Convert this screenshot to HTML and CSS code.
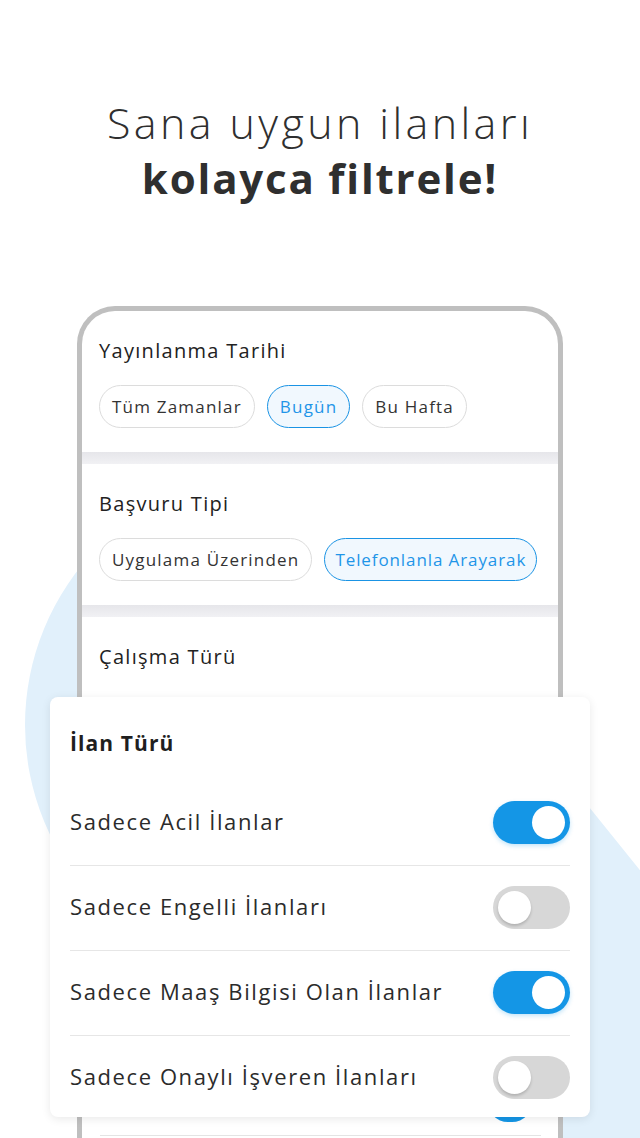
FILE: index.html
```html
<!DOCTYPE html>
<html lang="tr">
<head>
<meta charset="utf-8">
<title>Filtrele</title>
<link rel="stylesheet" href="styles.css">
</head>
<body>
<div class="page">
  <svg class="bg-shape" width="640" height="1138" viewBox="0 0 640 1138" aria-hidden="true">
    <path d="M278 978 A253 253 0 0 1 278 472 L340 498 L760 1019 L760 1200 L278 1200 Z" fill="#e1f0fb"/>
  </svg>

  <header class="hero">
    <h1 class="hero-title"><span class="light">Sana uygun ilanları</span><br><span class="bold">kolayca filtrele!</span></h1>
  </header>

  <div class="phone">
    <section class="f-section">
      <h2 class="f-title">Yayınlanma Tarihi</h2>
      <div class="chips">
        <span class="chip">Tüm Zamanlar</span>
        <span class="chip chip-on">Bugün</span>
        <span class="chip">Bu Hafta</span>
      </div>
    </section>
    <div class="sep"></div>
    <section class="f-section">
      <h2 class="f-title">Başvuru Tipi</h2>
      <div class="chips">
        <span class="chip">Uygulama Üzerinden</span>
        <span class="chip chip-on">Telefonlanla Arayarak</span>
      </div>
    </section>
    <div class="sep"></div>
    <section class="f-section f-last">
      <h2 class="f-title">Çalışma Türü</h2>
      <div class="under-row"><span class="under-toggle"></span></div>
    </section>
  </div>

  <div class="card">
    <h3 class="card-title">İlan Türü</h3>
    <div class="row"><span class="row-label">Sadece Acil İlanlar</span><span class="toggle on"><span class="knob"></span></span></div>
    <div class="row"><span class="row-label">Sadece Engelli İlanları</span><span class="toggle"><span class="knob"></span></span></div>
    <div class="row"><span class="row-label">Sadece Maaş Bilgisi Olan İlanlar</span><span class="toggle on"><span class="knob"></span></span></div>
    <div class="row"><span class="row-label">Sadece Onaylı İşveren İlanları</span><span class="toggle"><span class="knob"></span></span></div>
  </div>
</div>
</body>
</html>
```

FILE: styles.css
```css
* { box-sizing: border-box; }
html, body { margin: 0; padding: 0; background: #ffffff; }
body { font-family: "Open Sans", "Noto Sans", sans-serif; color: #2b2b2b; }

.page {
  position: relative;
  width: 640px;
  height: 1138px;
  overflow: hidden;
  background: #ffffff;
}

.bg-shape {
  position: absolute;
  left: 0;
  top: 0;
  z-index: 0;
}

.hero {
  position: relative;
  z-index: 1;
  padding-top: 95px;
  text-align: center;
}
.hero-title {
  margin: 0;
  font-size: 42px;
  line-height: 55px;
  color: #2f2f2f;
  font-weight: 400;
}
.hero-title .light { font-size: 43px; font-weight: 300; letter-spacing: 3.4px; }
.hero-title .bold { font-weight: 700; letter-spacing: 1.8px; }

.phone {
  position: relative;
  z-index: 1;
  margin: 101px 0 0 77px;
  width: 486px;
  height: 900px;
  border: 5px solid #bfbfbf;
  border-bottom: none;
  border-radius: 38px 38px 0 0;
  background: #ffffff;
}

.f-section {
  padding: 28px 18px 24px 17px;
}
.f-title {
  margin: 0;
  font-size: 20px;
  line-height: 24px;
  font-weight: 400;
  color: #222;
  letter-spacing: 1.3px;
}
.chips {
  display: flex;
  gap: 12px;
  margin-top: 22px;
}
.chip {
  display: inline-flex;
  align-items: center;
  height: 43px;
  padding: 0 12px;
  border: 1.5px solid #dcdcdc;
  border-radius: 22px;
  font-size: 17px;
  letter-spacing: 1.2px;
  color: #333;
  white-space: nowrap;
}
.chip-on {
  border-color: #1a93e4;
  background: #f1f8fe;
  color: #1f95e8;
}
.chip-on:last-child { padding: 0 10px; letter-spacing: 0.9px; }

.sep {
  height: 12px;
  background: linear-gradient(#e6e6ea, #f1f1f4);
}

.f-last { padding-bottom: 0; }
.under-row {
  display: flex;
  justify-content: flex-end;
  margin: 411px 0 0 1px;
  width: 441px;
  padding: 0 8px 13px 0;
  border-bottom: 1px solid #e4e4e4;
}
.under-toggle {
  width: 46px;
  height: 42px;
  border-radius: 21px;
  background: #1496e6;
}

.card {
  position: absolute;
  z-index: 2;
  left: 50px;
  top: 697px;
  width: 540px;
  height: 420px;
  padding: 34px 20px 0 20px;
  background: #ffffff;
  border-radius: 8px;
  box-shadow: 0 2px 10px rgba(0, 0, 0, 0.09);
}
.card-title {
  margin: 0 0 26px 0;
  font-size: 21px;
  line-height: 24px;
  font-weight: 700;
  color: #1f1f1f;
  letter-spacing: 1.1px;
}
.row {
  display: flex;
  align-items: center;
  justify-content: space-between;
  height: 85px;
  padding: 20px 0 21px 0;
  border-bottom: 1px solid #e6e6e6;
}
.row:last-child { border-bottom: none; height: 84px; }
.row-label {
  font-size: 22px;
  letter-spacing: 1.6px;
  color: #2b2b2b;
  margin-top: -3px;
}
.toggle {
  position: relative;
  display: flex;
  align-items: center;
  width: 77px;
  height: 43px;
  padding: 0 5px;
  border-radius: 22px;
  background: #d7d7d7;
  justify-content: flex-start;
}
.toggle.on {
  background: #1496e6;
  justify-content: flex-end;
  box-shadow: 0 2px 4px rgba(20, 150, 230, 0.25);
}
.knob {
  width: 33px;
  height: 33px;
  border-radius: 50%;
  background: #ffffff;
  box-shadow: 0 2px 3px rgba(0, 0, 0, 0.18);
}
.toggle.on .knob { box-shadow: none; }
```
